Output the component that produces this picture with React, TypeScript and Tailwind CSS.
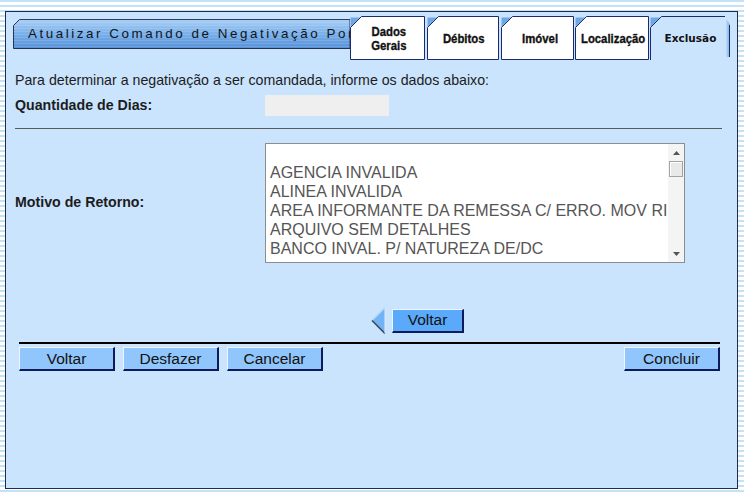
import React from "react";

const NAVY = "#1b2a6e";

function TitleBar() {
  return (
    <div className="relative mt-[7px] h-[30px] w-[337px] shrink-0 overflow-hidden">
      <svg className="absolute inset-0" width="337" height="30">
        <defs>
          <linearGradient id="tbar" x1="0" y1="0" x2="0" y2="1">
            <stop offset="0" stopColor="#a9cff4" />
            <stop offset="0.45" stopColor="#7cb2ec" />
            <stop offset="1" stopColor="#5690d6" />
          </linearGradient>
          <pattern id="tlines" width="4" height="3" patternUnits="userSpaceOnUse">
            <rect width="4" height="1" fill="#ffffff" opacity="0.12" />
          </pattern>
        </defs>
        <path d="M6.5 0.5 H337 V29.5 H0.5 V6.5 Z" fill="url(#tbar)" stroke="#23304f" />
        <path d="M6.5 0.5 H337 V29.5 H0.5 V6.5 Z" fill="url(#tlines)" />
      </svg>
      <div className="relative flex h-full items-center whitespace-nowrap pl-[15px] font-['Liberation_Sans',Arial,sans-serif] text-[13.4px] tracking-[2.55px] text-[#141414]">
        Atualizar Comando de Negativação Por
      </div>
    </div>
  );
}

function TabShape({ w }: { w: number }) {
  return (
    <svg className="absolute inset-0" width={w} height="44">
      <path d="M0.5 1.5 H10 L0.5 11 Z" fill="#6fa7e4" />
      <path
        d={`M0.5 11.5 L11.5 0.5 H${w - 1.5} V43.5 H0.5 Z`}
        fill="#ffffff"
        stroke={NAVY}
      />
    </svg>
  );
}

function ActiveTabShape({ w }: { w: number }) {
  return (
    <svg className="absolute inset-0" width={w} height="44">
      <path d="M0.5 1.5 H10 L0.5 11 Z" fill="#6fa7e4" />
      <path d={`M0.5 11.5 L11.5 0.5 H${w} V44 H0.5 Z`} fill="#cbe4fd" />
      <path d={`M0.5 44 V11.5 L11.5 0.5 H${w}`} fill="none" stroke={NAVY} />
    </svg>
  );
}

function TabEnd() {
  return (
    <svg width="6" height="44" className="shrink-0">
      <defs>
        <linearGradient id="tend" x1="0" y1="0" x2="1" y2="0">
          <stop offset="0" stopColor="#d6eafc" />
          <stop offset="1" stopColor="#6ea8e6" />
        </linearGradient>
      </defs>
      <path d="M0 3 Q3 4 5 9 V41 H0 Z" fill="url(#tend)" />
      <path d="M4.5 9 V41" stroke={NAVY} />
    </svg>
  );
}

// heavy, narrow tab captions
const condensed =
  "font-['Liberation_Sans',Arial,sans-serif] font-bold text-[13.5px] leading-[14px] text-[#111] scale-x-[0.84] whitespace-nowrap [-webkit-text-stroke:0.35px_#111]";

function Tabs() {
  return (
    <div className="mt-[4px] flex h-[44px] shrink-0">
      <div className="relative flex h-[44px] w-[76px] items-center justify-center">
        <TabShape w={76} />
        <div className={`relative pl-[2px] pt-[1px] text-center ${condensed}`}>
          Dados
          <br />
          Gerais
        </div>
      </div>
      <div className="relative ml-[1px] flex h-[44px] w-[73px] items-center justify-center">
        <TabShape w={73} />
        <div className={`relative pl-[1px] pt-[1px] ${condensed}`}>Débitos</div>
      </div>
      <div className="relative ml-[1px] flex h-[44px] w-[74px] items-center justify-center">
        <TabShape w={74} />
        <div className={`relative pl-[4px] pt-[1px] ${condensed}`}>Imóvel</div>
      </div>
      <div className="relative flex h-[44px] w-[75px] items-center justify-center">
        <TabShape w={75} />
        <div className={`relative pl-[2px] pt-[2px] ${condensed}`}>Localização</div>
      </div>
      <div className="relative flex h-[44px] w-[75px] items-center justify-center">
        <ActiveTabShape w={75} />
        <div className="relative pl-[6px] pt-[1px] font-['DejaVu_Sans',Verdana,sans-serif] text-[10.5px] font-bold text-[#111]">
          Exclusão
        </div>
      </div>
      <TabEnd />
    </div>
  );
}

const motivos = [
  "",
  "AGENCIA INVALIDA",
  "ALINEA INVALIDA",
  "AREA INFORMANTE DA REMESSA C/ ERRO. MOV RI",
  "ARQUIVO SEM DETALHES",
  "BANCO INVAL. P/ NATUREZA DE/DC",
];

function ListBox() {
  return (
    <div className="flex h-[120px] w-[420px] overflow-hidden border border-[#8d8d8d] bg-white">
      <div className="min-w-0 flex-1 overflow-hidden pl-[4px] font-['Liberation_Sans',Arial,sans-serif] text-[16px] text-[#555]">
        {motivos.map((m, i) => (
          <div key={i} className="h-[19px] whitespace-nowrap leading-[19px]">
            {m || "\u00a0"}
          </div>
        ))}
      </div>
      <div className="flex w-[16px] shrink-0 flex-col bg-[#f4f4f4]">
        <div className="flex h-[17px] items-center justify-center">
          <svg width="7" height="4">
            <path d="M3.5 0 L7 4 H0 Z" fill="#555" />
          </svg>
        </div>
        <div className="mx-[1px] h-[16px] border border-[#a3a3a3] bg-[#e9e9e9] shadow-[inset_1px_1px_0_#ffffff]" />
        <div className="flex-1" />
        <div className="flex h-[17px] items-center justify-center">
          <svg width="7" height="4">
            <path d="M0 0 H7 L3.5 4 Z" fill="#555" />
          </svg>
        </div>
      </div>
    </div>
  );
}

function BackArrow() {
  return (
    <svg width="15" height="27" viewBox="0 0 15 27" className="shrink-0">
      <path d="M14 0.5 L1 13.5 L14 26.5 Z" fill="#74b3f3" />
      <path d="M14 0.5 L1 13.5" stroke="#b4d8fb" strokeWidth="1.2" fill="none" />
      <path d="M1 13.5 L14 26.5" stroke="#3b475f" strokeWidth="1.6" fill="none" />
      <path d="M14 0.5 V26.5" stroke="#d8ecff" strokeWidth="1" fill="none" />
    </svg>
  );
}

function ActionButton({ label, extra = "" }: { label: string; extra?: string }) {
  return (
    <button
      type="button"
      className={`flex h-[24px] w-[96px] items-center justify-center border-t border-l border-b-2 border-r-2 border-t-[#eef6ff] border-l-[#eef6ff] border-b-[#0d1b58] border-r-[#0d1b58] bg-[#90c6fb] font-['Liberation_Sans',Arial,sans-serif] text-[15.5px] text-[#111] ${extra}`}
    >
      {label}
    </button>
  );
}

export default function App() {
  return (
    <div className="h-[495px] w-[744px] overflow-hidden bg-[repeating-linear-gradient(180deg,#c3e2f5_0px,#c3e2f5_2px,#ffffff_2px,#ffffff_5px)] pl-[5px] pt-[11px]">
      <div className="h-[478px] w-[733px] border border-[#1f2c4a] bg-[#cbe4fd]">
        {/* header: title bar with tab strip */}
        <div className="flex items-start pl-[7px]">
          <TitleBar />
          <Tabs />
        </div>

        <div className="pl-[9px] pr-[15px] font-['Liberation_Sans',Arial,sans-serif] text-[14.2px] text-[#1c1c1c]">
          <p className="mt-[12px] h-[16px] leading-[16px]">
            Para determinar a negativação a ser comandada, informe os dados abaixo:
          </p>

          <div className="mt-[7px] flex h-[21px] items-center">
            <div className="w-[250px] font-bold">Quantidade de Dias:</div>
            <div className="h-[21px] w-[124px] bg-[#efefef]" />
          </div>

          <div className="mt-[12px] border-t border-[#5a5a5a]" />

          <div className="mt-[14px] flex items-center">
            <div className="w-[250px] font-bold">Motivo de Retorno:</div>
            <ListBox />
          </div>

          <div className="mt-[44px] flex items-center gap-[6px] pl-[356px]">
            <BackArrow />
            <button
              type="button"
              className="flex h-[24px] w-[72px] items-center justify-center border-t border-l border-b-2 border-r-2 border-t-[#eef6ff] border-l-[#eef6ff] border-b-[#0d1b58] border-r-[#0d1b58] bg-[#5aa9fa] text-[15.5px] text-[#111]"
            >
              Voltar
            </button>
          </div>

          <div className="ml-[4px] mt-[8px] h-[2px] w-[701px] bg-black" />

          <div className="ml-[4px] mt-[3px] flex w-[701px] gap-[8px]">
            <ActionButton label="Voltar" />
            <ActionButton label="Desfazer" />
            <ActionButton label="Cancelar" />
            <ActionButton label="Concluir" extra="ml-auto" />
          </div>
        </div>
      </div>
    </div>
  );
}
